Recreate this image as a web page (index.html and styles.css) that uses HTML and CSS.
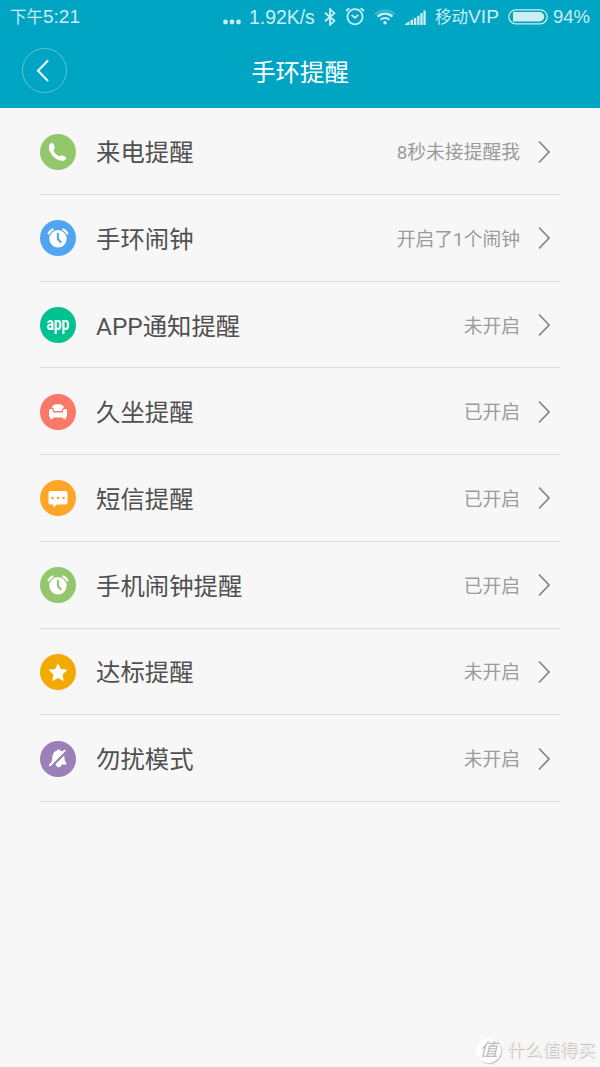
FILE: index.html
```
<!DOCTYPE html>
<html lang="zh-CN">
<head>
    <meta charset="UTF-8">
    <meta name="viewport" content="width=device-width, initial-scale=1.0">
    <title>手环提醒</title>
    <link rel="stylesheet" href="styles.css">
</head>
<body>
    <header>
        <div class="status-bar">
            <span class="time"><span class="cn">下午</span>5:21</span>
            <svg class="dots" width="18" height="6" viewBox="0 0 18 6"><circle cx="2.5" cy="3" r="2.4"/><circle cx="9" cy="3" r="2.4"/><circle cx="15.5" cy="3" r="2.4"/></svg>
            <span class="speed">1.92K/s</span>
            <svg class="bluetooth" width="12" height="18" viewBox="0 0 12 18"><path d="M1 4.8l9.4 8L6 16.8V1.2l4.4 4-9.4 8"/></svg>
            <svg class="alarm" width="20" height="20" viewBox="0 0 20 20"><circle cx="10" cy="10.8" r="7.6"/><path d="M6.7 8.8l3.3 3 3.3-3M1.1 5l3.2-2.9M18.9 5l-3.2-2.9"/></svg>
            <svg class="wifi" width="22" height="18" viewBox="0 0 22 18"><path class="faint" d="M1.3 6.4a14 14 0 0 1 19.4 0"/><path d="M3.6 8.6a10.8 10.8 0 0 1 14.8 0M6.6 11.7a6.5 6.5 0 0 1 8.8 0"/><circle cx="11" cy="14.8" r="1.7"/></svg>
            <svg class="signal" width="21" height="15" viewBox="0 0 21 15"><path d="M0 15v-1l4.5-2.700V15zM5.5 15v-5.200H8V15zM8.900 15V8h2.400v7zM12.200 15V5.700h2.300V15zM15.300 15V3h2.300v12zM18.400 15V.5h2.300V15z"/></svg>
            <span class="carrier"><span class="cn">移动</span>VIP</span>
            <svg class="battery" width="40" height="16" viewBox="0 0 40 16"><rect class="shell" x=".8" y=".8" width="38.4" height="14" rx="7"/><path d="M5 3.1h26.5a4.7 4.7 0 0 1 0 9.4H5z"/></svg>
            <span class="percent">94%</span>
        </div>
        <div class="title-bar">
            <button class="back-btn" aria-label="返回">
                <svg width="14" height="24" viewBox="0 0 14 24"><path d="M11.5 2L2 11.8l9.5 9.7"/></svg>
            </button>
            <h1>手环提醒</h1>
        </div>
    </header>

    <!-- shared shapes -->
    <svg class="defs" width="0" height="0">
        <symbol id="chevron" viewBox="0 0 12 24"><path d="M1 1.5L11 12 1 22.5" fill="none" stroke="#858585" stroke-width="1.7"/></symbol>
        <symbol id="clock" viewBox="0 0 36 36">
            <circle cx="18" cy="18.8" r="8.7" fill="#fff"/>
            <path d="M8.6 13.4q1.4-2.7 4.1-4M27.4 13.4q-1.4-2.7-4.1-4" fill="none" stroke="#fff" stroke-width="2.2" stroke-linecap="round"/>
            <path d="M17.9 13v6l3.3 3.7" fill="none" stroke="currentColor" stroke-width="2.1"/>
        </symbol>
    </svg>

    <ul class="reminder-list">
        <li class="reminder">
            <span class="icon call"><svg viewBox="0 0 36 36"><path d="M10.1 9.8c1.7-1.3 3.1-.8 3.7.8l.9 2.3c.5 1.5-1.2 2-1.2 3.2 0 2.1 3.5 5.7 5.7 6.1 1.3.2 1.8-1.4 3.3-.8l2.4 1.1c1.6.8 1.3 2.7.1 3.5-3 2-8.4.2-11.8-3.4C9.5 18.9 7.4 12.3 10.1 9.8z" fill="#fff"/></svg></span>
            <span class="name">来电提醒</span>
            <span class="state">8秒未接提醒我</span>
            <svg class="arrow"><use href="#chevron"/></svg>
        </li>
        <li class="reminder">
            <span class="icon band-alarm"><svg><use href="#clock"/></svg></span>
            <span class="name">手环闹钟</span>
            <span class="state">开启了1个闹钟</span>
            <svg class="arrow"><use href="#chevron"/></svg>
        </li>
        <li class="reminder">
            <span class="icon app"><svg viewBox="0 0 36 36"><text x="6.4" y="22.6" textLength="23" lengthAdjust="spacingAndGlyphs">app</text></svg></span>
            <span class="name">APP通知提醒</span>
            <span class="state">未开启</span>
            <svg class="arrow"><use href="#chevron"/></svg>
        </li>
        <li class="reminder">
            <span class="icon sit"><svg viewBox="0 0 36 36"><path d="M12.2 13.8c0-2.2 1.4-3.5 5.8-3.5s5.8 1.3 5.8 3.5c-1.4.5-2 1.5-2 3.2h-7.6c0-1.7-.6-2.7-2-3.2z" fill="#fff"/><path d="M9 16.5c0-2.1 4-2.1 4 0v1.9h10v-1.9c0-2.1 4-2.1 4 0v5c0 1.1-.6 1.7-1.6 1.9l.6 1.8h-2.2l-1-1.7h-9.6l-1 1.7H10l.6-1.8c-1-.2-1.6-.8-1.6-1.900z" fill="#fff"/></svg></span>
            <span class="name">久坐提醒</span>
            <span class="state">已开启</span>
            <svg class="arrow"><use href="#chevron"/></svg>
        </li>
        <li class="reminder">
            <span class="icon sms"><svg viewBox="0 0 36 36"><path d="M10.5 11h15q2 0 2 2v9.5q0 2-2 2H17l-3.8 3.3v-3.3h-2.7q-2 0-2-2V13q0-2 2-2z" fill="#fff"/><g fill="currentColor"><circle cx="12.5" cy="18" r="1.35"/><circle cx="18" cy="18" r="1.35"/><circle cx="23.5" cy="18" r="1.35"/></g></svg></span>
            <span class="name">短信提醒</span>
            <span class="state">已开启</span>
            <svg class="arrow"><use href="#chevron"/></svg>
        </li>
        <li class="reminder">
            <span class="icon phone-alarm"><svg><use href="#clock"/></svg></span>
            <span class="name">手机闹钟提醒</span>
            <span class="state">已开启</span>
            <svg class="arrow"><use href="#chevron"/></svg>
        </li>
        <li class="reminder">
            <span class="icon goal"><svg viewBox="0 0 36 36"><path d="M18 9l2.8 6 6.7.8-4.9 4.7 1.2 6.7-5.8-3.3-5.8 3.3 1.2-6.7-4.9-4.7 6.7-.8z" fill="#fff"/></svg></span>
            <span class="name">达标提醒</span>
            <span class="state">未开启</span>
            <svg class="arrow"><use href="#chevron"/></svg>
        </li>
        <li class="reminder">
            <span class="icon dnd"><svg viewBox="0 0 36 36"><path d="M10.6 22.2c2.2-2.3 1.2-6.4 2.5-9.3.9-1.900 2.300-3 4-3.300.3-1.500 2.700-1.500 3 0 1.200.2 2 .6 2.800 1.200zM24.200 14.600c.4 2.400.3 4.600 1.300 6.200.5.800 1 1.300 1 2.700h-5c0 1.500-1.100 2.800-2.600 2.800-1.700 0-2.900-1.200-2.900-2.800h-.8z" fill="#fff"/><path d="M10 24.200L24.600 9.600" stroke="#fff" stroke-width="2" stroke-linecap="round"/></svg></span>
            <span class="name">勿扰模式</span>
            <span class="state">未开启</span>
            <svg class="arrow"><use href="#chevron"/></svg>
        </li>
    </ul>

    <div class="watermark"><span class="seal">值</span><span>什么值得买</span></div>
</body>
</html>
```
FILE: styles.css
```
:root {
    --header-background: #00a5c4;
    --status-color: #cceef3;
    --background-color: #f7f7f7;
    --text-color: #505050;
    --state-color: #9b9b9b;
    --line-color: #dcdcdc;
}

* {
    margin: 0;
    padding: 0;
    box-sizing: border-box;
}

body {
    width: 600px;
    height: 1067px;
    overflow: hidden;
    position: relative;
    font-family: Roboto, "Noto Sans CJK SC", sans-serif;
    background-color: var(--background-color);
    color: var(--text-color);
}

svg {
    display: block;
    flex: none;
}

.defs {
    position: absolute;
}

header {
    height: 108.4px;
    background-color: var(--header-background);
    color: white;
}

/* Phone status bar */
.status-bar {
    height: 34px;
    padding-left: 10px;
    display: flex;
    align-items: center;
    font-family: "Liberation Sans", "Noto Sans CJK SC", sans-serif;
    font-size: 19px;
    line-height: 34px;
    white-space: nowrap;
    color: var(--status-color);
    fill: var(--status-color);
}

.status-bar .cn {
    font-size: 16.5px;
}

.time {
    width: 213px;
}

.dots {
    margin-top: 9px;
}

.speed {
    width: 66px;
    margin-left: 8px;
    font-size: 19.4px;
}

.bluetooth, .alarm, .wifi {
    fill: none;
    stroke: var(--status-color);
    stroke-width: 1.8;
}

.bluetooth {
    margin-left: 9px;
}

.alarm {
    margin-left: 9px;
    margin-top: -3px;
}

.wifi {
    margin-left: 9px;
    stroke-width: 2.2;
}

.wifi circle {
    fill: var(--status-color);
    stroke: none;
}

.wifi .faint {
    opacity: 0.3;
}

.signal {
    margin-left: 9px;
}

.carrier {
    width: 65px;
    margin-left: 9px;
    font-size: 19.2px;
}

.battery {
    margin-left: 8px;
}

.battery .shell {
    fill: none;
    stroke: var(--status-color);
    stroke-width: 1.2;
}

.percent {
    margin-left: 5px;
    font-size: 18.5px;
}

/* Title */
.title-bar {
    height: 73px;
    padding: 0 22px;
    display: grid;
    grid-template-columns: 45px 1fr 45px;
    align-items: center;
}

.back-btn {
    width: 45px;
    height: 45px;
    border: 1px solid rgba(255, 255, 255, 0.35);
    border-radius: 50%;
    background: none;
    display: flex;
    align-items: center;
    justify-content: center;
    padding-right: 4px;
}

.back-btn svg {
    fill: none;
    stroke: #e3f6f9;
    stroke-width: 2.2;
    stroke-linecap: round;
}

h1 {
    font-size: 24.4px;
    font-weight: 400;
    text-align: center;
}

/* Reminders */
.reminder-list {
    list-style-type: none;
    padding: 0 39px;
}

.reminder {
    height: 86.7px;
    padding: 1px 11px 0 1px;
    display: flex;
    align-items: center;
    border-bottom: 1px solid var(--line-color);
}

.icon {
    width: 36px;
    height: 36px;
    border-radius: 50%;
    background-color: currentColor;
}

.icon svg {
    width: 36px;
    height: 36px;
}

.call, .phone-alarm {
    color: #92c76c;
}

.band-alarm {
    color: #50a4f2;
}

.app {
    color: #00c291;
}

.app text {
    font-family: Roboto, sans-serif;
    font-size: 18.5px;
    font-weight: 700;
    fill: white;
}

.sit {
    color: #fa7866;
}

.sms {
    color: #ffa628;
}

.goal {
    color: #f2aa00;
}

.dnd {
    color: #9a7fb8;
}

.name {
    margin-left: 20px;
    padding-bottom: 2px;
    font-size: 24.4px;
}

.state {
    margin-left: auto;
    padding-bottom: 2px;
    font-size: 18.8px;
    color: var(--state-color);
}

.arrow {
    width: 12px;
    height: 24px;
    margin-left: 18px;
}

/* Site mark in the corner */
.watermark {
    position: absolute;
    right: 5px;
    bottom: 4px;
    display: flex;
    align-items: center;
    gap: 6px;
    font-size: 17.6px;
    line-height: 26px;
    color: #f3f3f3;
    text-shadow: 1px 1px 1px #b8b8b8;
}

.seal {
    width: 25px;
    height: 25px;
    border-radius: 50%;
    background-color: white;
    box-shadow: 1px 1px 1px #c4c4c4;
    text-align: center;
    font-size: 18px;
    line-height: 24px;
    color: #bcbcbc;
    text-shadow: none;
    font-style: italic;
}
```
